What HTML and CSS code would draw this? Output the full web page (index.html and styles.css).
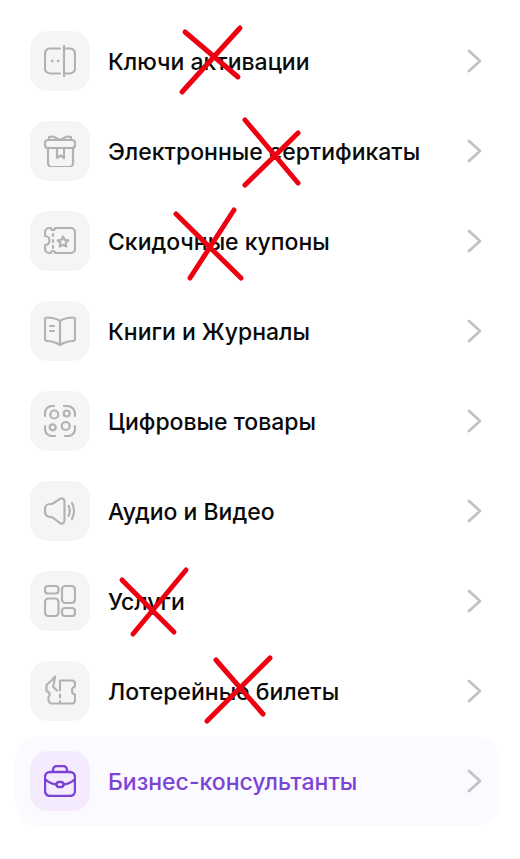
FILE: index.html
```html
<!DOCTYPE html>
<html lang="ru">
<head>
<meta charset="utf-8">
<title>Каталог</title>
<link rel="stylesheet" href="styles.css">
</head>
<body>
<ul class="menu">
  <li class="row">
    <span class="tile"><svg class="icon" viewBox="0 0 32 32"><path d="M16 3.500H6a5 5 0 0 0-5 5v15a5 5 0 0 0 5 5h10M20 .8v30.400M20 3.500h6a5 5 0 0 1 5 5v15a5 5 0 0 1-5 5h-6"/><path class="dots" d="M8 16h.4M14 16h.4"/></svg></span>
    <span class="label">Ключи активации</span>
    <svg class="chev" viewBox="0 0 16 24"><path d="M2 2l11 10-11 10"/></svg>
  </li>
  <li class="row">
    <span class="tile"><svg class="icon" viewBox="0 0 32 32"><rect x="1" y="5" width="30" height="8" rx="3"/><path d="M4 13v15a4 4 0 0 0 4 4h17a4 4 0 0 0 4-4V13M16 5 9 1.500 5 2v3M16 5l7-3.500L27 2v3M13 13v10l3.500-2.500L20 23V13"/></svg></span>
    <span class="label">Электронные сертификаты</span>
    <svg class="chev" viewBox="0 0 16 24"><path d="M2 2l11 10-11 10"/></svg>
  </li>
  <li class="row">
    <span class="tile"><svg class="icon" viewBox="0 0 32 32"><path d="M11 3H27a4 4 0 0 1 4 4v17a4 4 0 0 1-4 4H11a2 2 0 0 0-4 0H5a4 4 0 0 1-4-4v-4a4.500 4.500 0 0 0 0-9V7a4 4 0 0 1 4-4h2a2 2 0 0 0 4 0z"/><path d="M9 9v2M9 15v2M9 21v2M19 11.500l1.700 3.400 3.600.5-2.600 2.500.6 3.600-3.300-1.700-3.300 1.700.6-3.600-2.600-2.500 3.600-.5z"/></svg></span>
    <span class="label">Скидочные купоны</span>
    <svg class="chev" viewBox="0 0 16 24"><path d="M2 2l11 10-11 10"/></svg>
  </li>
  <li class="row">
    <span class="tile"><svg class="icon" viewBox="0 0 32 32"><path d="M16 6C13 4 8 2.500 3 2.500a2 2 0 0 0-2 2V24a2 2 0 0 0 2 2c5 0 9 1.500 13 4 4-2.500 8-4 13-4a2 2 0 0 0 2-2V4.500a2 2 0 0 0-2-2C24 2.500 19 4 16 6zM16 6v24M6 11h4M6 16h4"/></svg></span>
    <span class="label">Книги и Журналы</span>
    <svg class="chev" viewBox="0 0 16 24"><path d="M2 2l11 10-11 10"/></svg>
  </li>
  <li class="row">
    <span class="tile"><svg class="icon" viewBox="0 0 32 32"><path d="M1 11V8a7 7 0 0 1 7-7h2M20 1h3a8 8 0 0 1 8 8v2M31 21v3a7 7 0 0 1-7 7h-3M11 31H8a7 7 0 0 1-7-7v-3"/><circle cx="10.300" cy="9.500" r="4"/><circle cx="22.700" cy="8.500" r="3"/><circle cx="8.700" cy="22.300" r="3"/><circle cx="21.700" cy="21" r="4"/></svg></span>
    <span class="label">Цифровые товары</span>
    <svg class="chev" viewBox="0 0 16 24"><path d="M2 2l11 10-11 10"/></svg>
  </li>
  <li class="row">
    <span class="tile"><svg class="icon" viewBox="0 0 32 32"><path d="M8 9 16 3.800a3 3 0 0 1 4.500 2.500v19.400a3 3 0 0 1-4.500 2.500L8 22H6a5 5 0 0 1-5-5v-3a5 5 0 0 1 5-5zM24.500 11c1.500 3 1.500 7 0 10M28 8c2.500 5 2.500 11 0 16"/></svg></span>
    <span class="label">Аудио и Видео</span>
    <svg class="chev" viewBox="0 0 16 24"><path d="M2 2l11 10-11 10"/></svg>
  </li>
  <li class="row">
    <span class="tile"><svg class="icon" viewBox="0 0 32 32"><rect x="1" y="1" width="13.500" height="7.500" rx="3"/><rect x="1" y="13.500" width="13.500" height="17.500" rx="3.500"/><rect x="18" y="1" width="13" height="17" rx="3.500"/><rect x="18" y="23" width="13" height="8" rx="3"/></svg></span>
    <span class="label">Услуги</span>
    <svg class="chev" viewBox="0 0 16 24"><path d="M2 2l11 10-11 10"/></svg>
  </li>
  <li class="row">
    <span class="tile"><svg class="icon" viewBox="0 0 32 32"><path d="M16 5.500H28a3 3 0 0 1 3 3v3a4 4 0 0 0-3 4 4 4 0 0 0 3 4v6a3 3 0 0 1-3 3H8a3.500 3.500 0 0 1-3.500-3.500v-1.500a3 3 0 0 1 1-3 4 4 0 0 0-3-4.500V10L9 4l2-2.500-1 6.500-1 3.500 4 4M16 5.500v10M16 19.500v3M16 26v2.500"/></svg></span>
    <span class="label">Лотерейные билеты</span>
    <svg class="chev" viewBox="0 0 16 24"><path d="M2 2l11 10-11 10"/></svg>
  </li>
  <li class="row row-accent">
    <span class="tile"><svg class="icon" viewBox="0 0 32 32"><path d="M9 7V5a4 4 0 0 1 4-4h6a4 4 0 0 1 4 4v2M6 7h20a5 5 0 0 1 5 5v14a5 5 0 0 1-5 5H6a5 5 0 0 1-5-5V12a5 5 0 0 1 5-5zM1 14c3 3 7 5 11.500 5.500M31 14c-3 3-7 5-11.500 5.500"/><rect x="12.500" y="17" width="7" height="5" rx="2.500"/></svg></span>
    <span class="label">Бизнес-консультанты</span>
    <svg class="chev" viewBox="0 0 16 24"><path d="M2 2l11 10-11 10"/></svg>
  </li>
</ul>
<svg class="marks" viewBox="0 0 520 859">
  <path d="M185 32 238 77M240 28 182 92"/>
  <path d="M245 120 298 183M298 133 245 185"/>
  <path d="M176 214 241 278M234 210 190 278"/>
  <path d="M122 580 174 632M186 570 133 634"/>
  <path d="M216 660 263 714M270 658 207 721"/>
</svg>
</body>
</html>
```

FILE: styles.css
```css
html, body {
  margin: 0;
  padding: 0;
  background: #fff;
}
body {
  position: relative;
  height: 859px;
  overflow: hidden;
  font-family: Inter, "Noto Sans", sans-serif;
}
.menu {
  list-style: none;
  margin: 0;
  padding: 16px 20px 0 15px;
}
.row {
  display: flex;
  align-items: center;
  height: 90px;
  padding: 0 17px 0 15px;
  box-sizing: border-box;
  border-radius: 24px;
}
.tile {
  flex: none;
  display: flex;
  align-items: center;
  justify-content: center;
  width: 60px;
  height: 60px;
  border-radius: 18px;
  background: #f5f5f5;
}
.icon {
  width: 32px;
  height: 32px;
  fill: none;
  stroke: #b2b2b2;
  stroke-width: 2.200;
  stroke-linecap: round;
  stroke-linejoin: round;
}
.dots {
  stroke-width: 2.600;
}
.label {
  flex: 1;
  margin-left: 18px;
  padding-top: 2px;
  font-size: 23px;
  font-weight: 500;
  color: #0a0a0a;
  white-space: nowrap;
}
.chev {
  flex: none;
  width: 16px;
  height: 24px;
  fill: none;
  stroke: #c2c2c2;
  stroke-width: 2.800;
  stroke-linecap: round;
  stroke-linejoin: round;
}
.row-accent {
  background: #fbfaff;
}
.row-accent .tile {
  background: #f4ebff;
}
.row-accent .icon {
  stroke: #7c44d6;
  stroke-width: 2.400;
}
.row-accent .label {
  color: #7c44d6;
}
.marks {
  position: absolute;
  left: 0;
  top: 0;
  width: 520px;
  height: 859px;
  fill: none;
  stroke: #ee0010;
  stroke-width: 5;
  stroke-linecap: round;
  pointer-events: none;
}
```
